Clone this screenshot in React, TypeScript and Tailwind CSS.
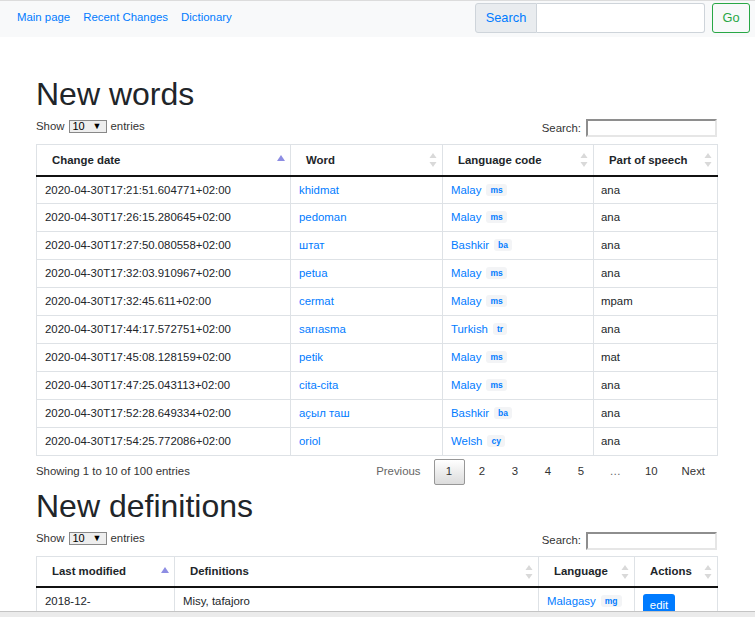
import React from 'react';

type Word = { date: string; word: string; lang: string; code: string; pos: string };

const words: Word[] = [
  { date: '2020-04-30T17:21:51.604771+02:00', word: 'khidmat', lang: 'Malay', code: 'ms', pos: 'ana' },
  { date: '2020-04-30T17:26:15.280645+02:00', word: 'pedoman', lang: 'Malay', code: 'ms', pos: 'ana' },
  { date: '2020-04-30T17:27:50.080558+02:00', word: 'штат', lang: 'Bashkir', code: 'ba', pos: 'ana' },
  { date: '2020-04-30T17:32:03.910967+02:00', word: 'petua', lang: 'Malay', code: 'ms', pos: 'ana' },
  { date: '2020-04-30T17:32:45.611+02:00', word: 'cermat', lang: 'Malay', code: 'ms', pos: 'mpam' },
  { date: '2020-04-30T17:44:17.572751+02:00', word: 'sarıasma', lang: 'Turkish', code: 'tr', pos: 'ana' },
  { date: '2020-04-30T17:45:08.128159+02:00', word: 'petik', lang: 'Malay', code: 'ms', pos: 'mat' },
  { date: '2020-04-30T17:47:25.043113+02:00', word: 'cita-cita', lang: 'Malay', code: 'ms', pos: 'ana' },
  { date: '2020-04-30T17:52:28.649334+02:00', word: 'аҫыл таш', lang: 'Bashkir', code: 'ba', pos: 'ana' },
  { date: '2020-04-30T17:54:25.772086+02:00', word: 'oriol', lang: 'Welsh', code: 'cy', pos: 'ana' },
];

function SortAsc() {
  return (
    <svg width="8" height="6" viewBox="0 0 8 6" className="absolute right-[5px] top-[10px]">
      <path d="M4 0 L8 6 L0 6 Z" fill="#8d8de3" />
    </svg>
  );
}

function SortBoth() {
  return (
    <svg width="8" height="14" viewBox="0 0 8 14" className="absolute right-[5px] top-[8px]">
      <path d="M4 0 L7.5 5 L0.5 5 Z" fill="#d9d9d9" />
      <path d="M0.5 9 L7.5 9 L4 14 Z" fill="#d9d9d9" />
    </svg>
  );
}

function Badge({ code }: { code: string }) {
  return (
    <span className="ml-[5px] inline-block rounded-[3px] bg-[#f3f4f6] px-[4px] text-[8.5px] font-bold leading-[12px] text-[#007bff] align-[1px]">
      {code}
    </span>
  );
}

function Th({ children, sort }: { children: React.ReactNode; sort: 'asc' | 'both' }) {
  return (
    <th className="relative h-[31px] border-x border-t border-b-2 border-x-[#dee2e6] border-t-[#dee2e6] border-b-[#111] pl-[15px] pr-[16px] text-left align-middle font-bold text-[#212529]">
      {children}
      {sort === 'asc' ? <SortAsc /> : <SortBoth />}
    </th>
  );
}

function TableTools() {
  return (
    <div className="mt-[4px] flex h-[20px] items-start justify-between text-[#333]">
      <div className="flex h-[18px] items-center">
        Show
        <span className="mx-[4px] flex h-[13px] w-[38px] items-center justify-between border border-[#888] bg-[#eee] pl-[3px] pr-[4px] text-[11px] leading-none text-black">
          10<span className="text-[9px]">▼</span>
        </span>
        entries
      </div>
      <div className="mt-[2px] flex items-center">
        <span className="mr-[5px]">Search:</span>
        <span className="h-[18px] w-[131px] border-2 border-t-[#8e8e8e] border-l-[#8e8e8e] border-r-[#e6e6e6] border-b-[#e6e6e6] bg-white" />
      </div>
    </div>
  );
}

export default function App() {
  return (
    <div
      className="relative h-[617px] overflow-hidden bg-white text-[11.4px] text-[#212529]"
      style={{ fontFamily: '"Liberation Sans", Arial, sans-serif' }}
    >
      <nav className="flex h-[37px] items-center justify-between border-t border-[#dcdcdc] bg-[#f8f9fa] pb-[3px] pl-[17px] pr-[5px]">
        <div className="flex gap-[13px] text-[#007bff]">
          <a href="#">Main page</a>
          <a href="#">Recent Changes</a>
          <a href="#">Dictionary</a>
        </div>
        <div className="flex items-center text-[12.8px]">
          <span className="flex h-[30px] w-[62px] items-center justify-center rounded-l-[3px] border border-[#ced4da] bg-[#e9ecef] text-[#007bff]">
            Search
          </span>
          <span className="h-[30px] w-[168px] rounded-r-[3px] border border-l-0 border-[#ced4da] bg-white" />
          <button className="ml-[7px] flex h-[30px] w-[38px] items-center justify-center rounded-[3px] border border-[#28a745] text-[#28a745]">
            Go
          </button>
        </div>
      </nav>

      <main className="ml-[36px] w-[681px]">
        <h1 className="mt-[38px] text-[32px] leading-[38.4px] font-normal">New words</h1>
        <TableTools />
        <table className="mt-[7px] w-full table-fixed border-collapse">
          <colgroup>
            <col className="w-[254px]" />
            <col className="w-[152px]" />
            <col className="w-[151px]" />
            <col className="w-[124px]" />
          </colgroup>
          <thead>
            <tr>
              <Th sort="asc">Change date</Th>
              <Th sort="both">Word</Th>
              <Th sort="both">Language code</Th>
              <Th sort="both">Part of speech</Th>
            </tr>
          </thead>
          <tbody>
            {words.map((w) => (
              <tr key={w.date} className="h-[28px]">
                <td className="border border-[#dee2e6] pl-[8px] align-middle">{w.date}</td>
                <td className="border border-[#dee2e6] pl-[8px] align-middle text-[#007bff]">{w.word}</td>
                <td className="border border-[#dee2e6] pl-[8px] align-middle">
                  <span className="text-[#007bff]">{w.lang}</span>
                  <Badge code={w.code} />
                </td>
                <td className="border border-[#dee2e6] pl-[7px] align-middle">{w.pos}</td>
              </tr>
            ))}
          </tbody>
        </table>

        <div className="flex h-[31px] items-center justify-between text-[#333]">
          <span>Showing 1 to 10 of 100 entries</span>
          <div className="flex items-center gap-[2px]">
            <span className="px-[11px] text-[#666]">Previous</span>
            <span className="flex h-[26px] w-[31px] items-center justify-center rounded-[2px] border border-[#979797] bg-gradient-to-b from-white to-[#dcdcdc]">
              1
            </span>
            <span className="w-[31px] text-center">2</span>
            <span className="w-[31px] text-center">3</span>
            <span className="w-[31px] text-center">4</span>
            <span className="w-[31px] text-center">5</span>
            <span className="px-[11px] text-[#666]">…</span>
            <span className="px-[11px]">10</span>
            <span className="pl-[11px] pr-[12px]">Next</span>
          </div>
        </div>

        <h1 className="text-[32px] leading-[38.4px] font-normal">New definitions</h1>
        <TableTools />
        <table className="mt-[6px] w-full table-fixed border-collapse">
          <colgroup>
            <col className="w-[138px]" />
            <col className="w-[364px]" />
            <col className="w-[96px]" />
            <col className="w-[83px]" />
          </colgroup>
          <thead>
            <tr>
              <Th sort="asc">Last modified</Th>
              <Th sort="both">Definitions</Th>
              <Th sort="both">Language</Th>
              <Th sort="both">Actions</Th>
            </tr>
          </thead>
          <tbody>
            <tr>
              <td className="border border-[#dee2e6] pt-[5px] pl-[8px] align-top leading-[16px]">
                2018-12-
                <br />
                20T22:19:07+01:00
              </td>
              <td className="border border-[#dee2e6] pt-[5px] pl-[8px] align-top leading-[16px]">Misy, tafajoro</td>
              <td className="border border-[#dee2e6] pt-[5px] pl-[8px] align-top leading-[16px]">
                <span className="text-[#007bff]">Malagasy</span>
                <Badge code="mg" />
              </td>
              <td className="border border-[#dee2e6] pt-[6px] pl-[8px] align-top">
                <span className="inline-flex h-[22px] w-[32px] items-center justify-center rounded-[3px] bg-[#007bff] text-white">
                  edit
                </span>
              </td>
            </tr>
          </tbody>
        </table>
      </main>

      <div className="absolute inset-x-0 bottom-0 h-[6px] border-t border-[#c4c4c4] bg-[#ebebeb]" />
    </div>
  );
}
